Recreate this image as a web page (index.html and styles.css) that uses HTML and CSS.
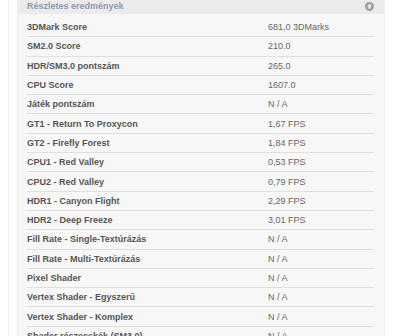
FILE: index.html
```html
<!DOCTYPE html>
<html>
<head>
<meta charset="utf-8">
<link rel="stylesheet" href="styles.css">
</head>
<body>
<div class="page">
  <div class="outer">
    <div class="panel">
      <div class="panel-head">
        <span class="title">Részletes eredmények</span>
        <span class="toggle"><svg width="9" height="9" viewBox="0 0 10 10"><circle cx="5" cy="5" r="5" fill="#a0a0a0"/><path d="M5 2.2 L7.4 5 H5.9 V7.6 H4.1 V5 H2.6 Z" fill="#fff"/></svg></span>
      </div>
      <div class="rows">
        <div class="row"><span class="lbl">3DMark Score</span><span class="val">681,0 3DMarks</span></div>
        <div class="row"><span class="lbl">SM2.0 Score</span><span class="val">210.0</span></div>
        <div class="row"><span class="lbl">HDR/SM3.0 pontszám</span><span class="val">265.0</span></div>
        <div class="row"><span class="lbl">CPU Score</span><span class="val">1607.0</span></div>
        <div class="row"><span class="lbl">Játék pontszám</span><span class="val">N / A</span></div>
        <div class="row"><span class="lbl">GT1 - Return To Proxycon</span><span class="val">1,67 FPS</span></div>
        <div class="row"><span class="lbl">GT2 - Firefly Forest</span><span class="val">1,84 FPS</span></div>
        <div class="row"><span class="lbl">CPU1 - Red Valley</span><span class="val">0,53 FPS</span></div>
        <div class="row"><span class="lbl">CPU2 - Red Valley</span><span class="val">0,79 FPS</span></div>
        <div class="row"><span class="lbl">HDR1 - Canyon Flight</span><span class="val">2,29 FPS</span></div>
        <div class="row"><span class="lbl">HDR2 - Deep Freeze</span><span class="val">3,01 FPS</span></div>
        <div class="row"><span class="lbl">Fill Rate - Single-Textúrázás</span><span class="val">N / A</span></div>
        <div class="row"><span class="lbl">Fill Rate - Multi-Textúrázás</span><span class="val">N / A</span></div>
        <div class="row"><span class="lbl">Pixel Shader</span><span class="val">N / A</span></div>
        <div class="row"><span class="lbl">Vertex Shader - Egyszerű</span><span class="val">N / A</span></div>
        <div class="row"><span class="lbl">Vertex Shader - Komplex</span><span class="val">N / A</span></div>
        <div class="row"><span class="lbl">Shader részecskék (SM3.0)</span><span class="val">N / A</span></div>
      </div>
    </div>
  </div>
</div>
</body>
</html>
```
FILE: styles.css
```css
html, body {
  margin: 0;
  padding: 0;
  background: #fff;
  overflow: hidden;
}
body {
  font-family: "Liberation Sans", Arial, sans-serif;
  font-size: 9px;
}
.page {
  padding-left: 8px;
  width: 380px;
}
.outer {
  border-left: 1px solid #efefef;
  padding-left: 8px;
}
.panel {
  width: 366px;
  margin-top: -3px;
  background: #f7f7f7;
  border: 1px solid #ececec;
}
.panel-head {
  height: 16px;
  display: flex;
  align-items: center;
  justify-content: space-between;
  background: #ebebeb;
  padding: 0 10px 0 9px;
}
.title {
  font-weight: bold;
  color: #8a9ab0;
  font-size: 9px;
}
.toggle {
  display: flex;
  padding-top: 1px;
}
.rows {
  padding: 4px 10px 0 9px;
}
.row {
  height: 18.3px;
  display: flex;
  align-items: center;
  border-bottom: 1px solid #e0e0e0;
}
.lbl {
  width: 241px;
  font-weight: bold;
  color: #555;
}
.val {
  color: #666;
}
```
